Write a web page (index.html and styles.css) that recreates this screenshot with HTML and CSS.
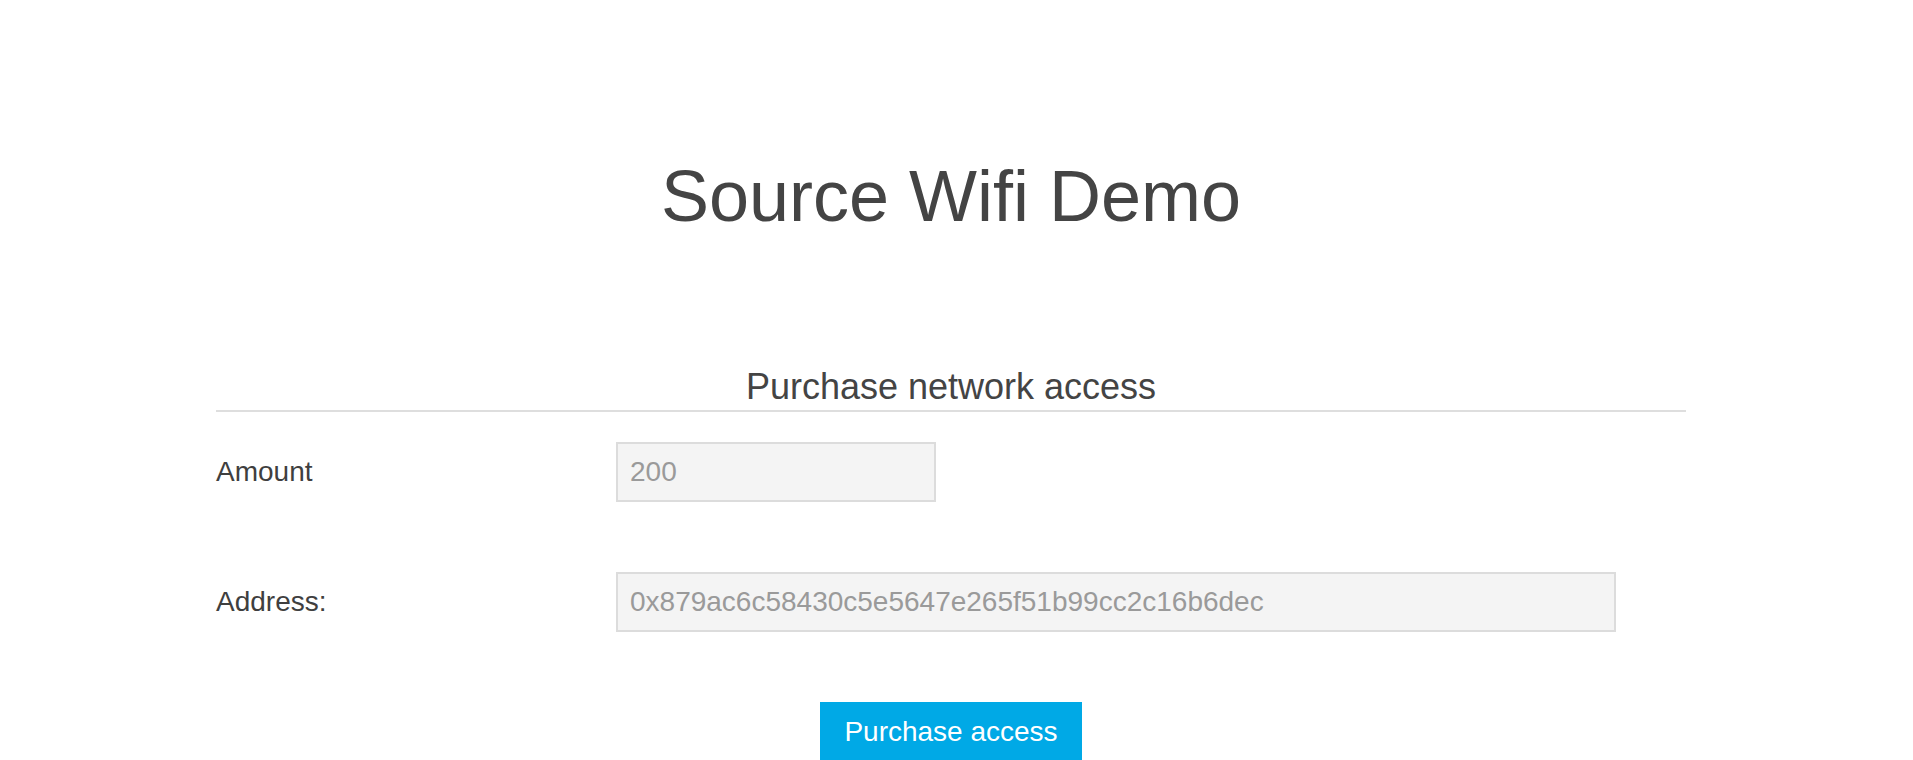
FILE: index.html
```html
<!DOCTYPE html>
<html lang="en">
<head>
<meta charset="utf-8">
<title>Source Wifi Demo</title>
<link rel="stylesheet" href="styles.css">
</head>
<body>
<div class="page">
  <h1 class="title">Source Wifi Demo</h1>
  <form class="form">
    <div class="legend">Purchase network access</div>
    <div class="row">
      <label class="label" for="amount">Amount</label>
      <input class="field field-short" id="amount" type="text" value="200" disabled>
    </div>
    <div class="row">
      <label class="label" for="address">Address:</label>
      <input class="field field-long" id="address" type="text" value="0x879ac6c58430c5e5647e265f51b99cc2c16b6dec" disabled>
    </div>
    <div class="actions">
      <button class="button" type="button">Purchase access</button>
    </div>
  </form>
</div>
</body>
</html>
```
FILE: styles.css
```css
html {
  overflow: hidden;
}
body {
  margin: 0;
  padding: 0 11px 0 0;
  background: #fff;
  color: #444;
  font-family: "Liberation Sans", Arial, Helvetica, sans-serif;
}
.page {
  width: 1470px;
  margin: 0 auto;
}
.title {
  margin: 153px 0 0;
  font-size: 72px;
  line-height: 86px;
  font-weight: normal;
  text-align: center;
  color: #444;
}
.form {
  margin-top: 126px;
}
.legend {
  font-size: 36px;
  line-height: 44px;
  text-align: center;
  padding-bottom: 1px;
  border-bottom: 2px solid #dedede;
  color: #444;
}
.row {
  display: flex;
  align-items: center;
  margin-top: 30px;
}
.row + .row {
  margin-top: 70px;
}
.label {
  width: 400px;
  flex: none;
  font-size: 28px;
  color: #3f3f3f;
}
.field {
  box-sizing: border-box;
  height: 60px;
  margin: 0;
  padding: 0 12px;
  border: 2px solid #dcdcdc;
  border-radius: 0;
  background: #f4f4f4;
  font-family: "Liberation Sans", Arial, Helvetica, sans-serif;
  font-size: 28px;
  color: #9a9a9a;
  -webkit-text-fill-color: #9a9a9a;
  opacity: 1;
}
.field-short {
  width: 320px;
}
.field-long {
  width: 1000px;
}
.actions {
  display: flex;
  justify-content: center;
  margin-top: 70px;
}
.button {
  height: 60px;
  padding: 0 24px;
  border: 0;
  border-radius: 0;
  background: #00a9e6;
  color: #fff;
  font-family: "Liberation Sans", Arial, Helvetica, sans-serif;
  font-size: 28px;
  line-height: 60px;
}
```
